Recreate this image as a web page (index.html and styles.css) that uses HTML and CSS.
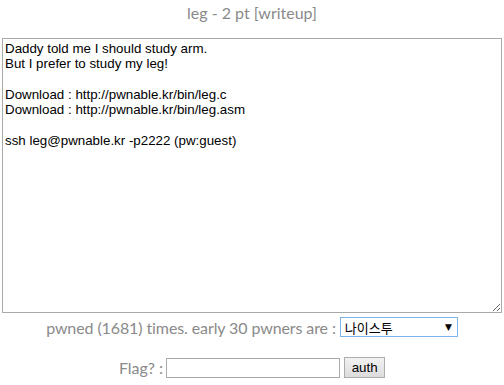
FILE: index.html
```html
<!DOCTYPE html>
<html>
<head>
    <meta charset="UTF-8">
    <title>leg - 2 pt</title>
    <link rel="stylesheet" href="styles.css">
</head>
<body>
    <div class="challenge">
        <!-- challenge title -->
        <div class="title">leg - 2 pt [writeup]</div>
        <textarea class="description" readonly>Daddy told me I should study arm.
But I prefer to study my leg!

Download : http://pwnable.kr/bin/leg.c
Download : http://pwnable.kr/bin/leg.asm

ssh leg@pwnable.kr -p2222 (pw:guest)</textarea>
        <div class="pwned-row">
            <span class="pwned-text">pwned (1681) times. early 30 pwners are :</span>
            <div class="pwner-select">
                <span class="pwner-name">나이스투</span>
                <span class="arrow">&#9660;</span>
            </div>
        </div>
        <!-- flag submit -->
        <form class="flag-row" onsubmit="return false;">
            <span>Flag? :</span>
            <input type="text" class="flag-input">
            <button class="auth-button">auth</button>
        </form>
    </div>
</body>
</html>
```

FILE: styles.css
```css
body {
    margin: 0;
    font-family: Lato, "Open Sans", sans-serif;
    font-size: 16px;
    color: #8a8a8a;
    background-color: #fff;
}
.challenge {
    width: 500px;
    margin: 0 auto;
    text-align: center;
}
.title {
    padding-top: 3px;
    line-height: 19px;
    height: 35px;
}
.description {
    display: block;
    box-sizing: border-box;
    width: 500px;
    height: 275px;
    margin: 0;
    padding: 2px;
    border: 1px solid #a9a9a9;
    font-family: "Liberation Sans", Arial, sans-serif;
    font-size: 13.33px;
    line-height: 15.3px;
    color: #000;
    resize: both;
    outline: none;
}
.pwned-row {
    display: flex;
    justify-content: center;
    align-items: center;
    gap: 4px;
    margin-top: 4px;
    height: 20px;
}
.pwned-text {
    letter-spacing: -0.1px;
}
.pwner-select {
    box-sizing: border-box;
    width: 118px;
    height: 20px;
    border: 1px solid #7eb4ea;
    display: flex;
    align-items: center;
    justify-content: space-between;
    padding: 0 5px 0 4px;
    background-color: #fff;
}
.pwner-name {
    font-family: "Noto Sans CJK KR", sans-serif;
    font-size: 13px;
    color: #000;
}
.arrow {
    font-family: "DejaVu Sans", sans-serif;
    font-size: 9px;
    color: #000;
}
.flag-row {
    display: flex;
    justify-content: center;
    align-items: center;
    margin: 20px 0 0 0;
    height: 21px;
}
.flag-input {
    box-sizing: border-box;
    width: 174px;
    height: 20px;
    margin: 0 4px 0 3px;
    border: 1px solid #a9a9a9;
    padding: 1px 2px;
}
.auth-button {
    box-sizing: border-box;
    width: 41px;
    height: 21px;
    padding: 0;
    border: 1px solid #adadad;
    background: linear-gradient(#f2f2f2, #dcdcdc);
    font-family: "Liberation Sans", Arial, sans-serif;
    font-size: 13.33px;
    color: #000;
}
```
